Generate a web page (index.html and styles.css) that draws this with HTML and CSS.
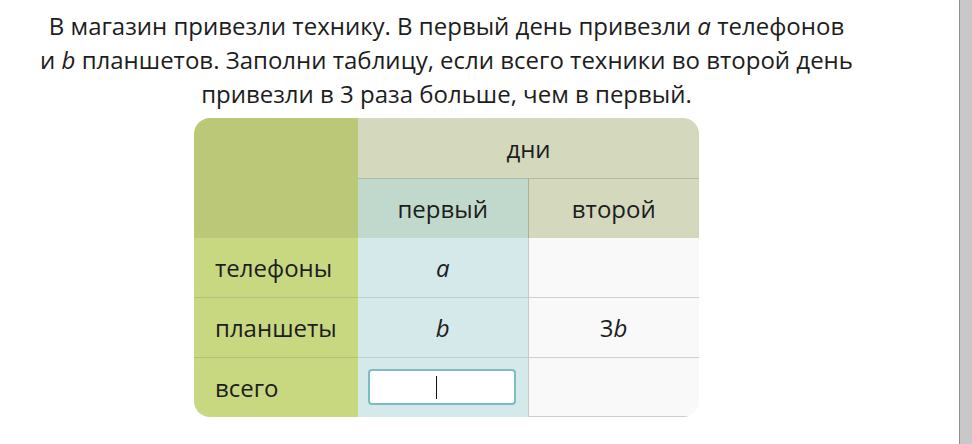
FILE: index.html
```html
<!DOCTYPE html>
<html lang="ru">
<head>
<meta charset="utf-8">
<title>Таблица</title>
<link rel="stylesheet" href="styles.css">
</head>
<body>
<div class="page">
  <main class="content">
    <p class="task">В магазин привезли технику. В первый день привезли <i>a</i> телефонов<br>и <i>b</i> планшетов. Заполни таблицу, если всего техники во второй день<br>привезли в 3 раза больше, чем в первый.</p>
    <div class="table-wrap">
      <table class="grid">
        <colgroup>
          <col class="c-label">
          <col class="c-first">
          <col class="c-second">
        </colgroup>
        <thead>
          <tr>
            <th class="corner" rowspan="2"></th>
            <th class="days" colspan="2">дни</th>
          </tr>
          <tr>
            <th class="h-first">первый</th>
            <th class="h-second">второй</th>
          </tr>
        </thead>
        <tbody>
          <tr>
            <th class="label">телефоны</th>
            <td class="first"><i>a</i></td>
            <td class="second"></td>
          </tr>
          <tr>
            <th class="label">планшеты</th>
            <td class="first"><i>b</i></td>
            <td class="second">3<i>b</i></td>
          </tr>
          <tr class="last">
            <th class="label">всего</th>
            <td class="first"><div class="field"><span class="caret"></span></div></td>
            <td class="second"></td>
          </tr>
        </tbody>
      </table>
    </div>
  </main>
  <div class="scrollbar"></div>
</div>
</body>
</html>
```

FILE: styles.css
```css
html, body {
  margin: 0;
  padding: 0;
  background: #ffffff;
}

body {
  font-family: "Open Sans", "Noto Sans", sans-serif;
  color: #1d1d1d;
}

.page {
  display: grid;
  grid-template-columns: 893px 1fr 13px;
  height: 444px;
  overflow: hidden;
}

.content {
  grid-column: 1;
  text-align: center;
}

.scrollbar {
  grid-column: 3;
  background: #c8c8c8;
  border-left: 1px solid #8f8f8f;
}

.task {
  margin: 9px 0 0;
  font-size: 24px;
  line-height: 34px;
}

.task i {
  font-style: italic;
}

.table-wrap {
  width: 505px;
  margin: 7px auto 0;
  border-radius: 16px;
  overflow: hidden;
}

.grid {
  width: 505px;
  border-collapse: collapse;
  table-layout: fixed;
  font-size: 24px;
}

.c-label { width: 164px; }
.c-first { width: 170px; }
.c-second { width: 171px; }

.grid th,
.grid td {
  height: 59px;
  padding: 0;
  font-weight: normal;
  text-align: center;
  vertical-align: middle;
  border-top: 1px solid #c3c6b6;
}

.grid thead tr:first-child th {
  border-top: none;
  height: 60px;
}

.corner {
  background: #bac878;
}

.days {
  background: #d4d8bd;
}

.h-first {
  background: #c1d9cc;
  border-top-color: #b3b8a3 !important;
}

.h-second {
  background: #d4d8bd;
  border-top-color: #b3b8a3 !important;
  border-left: 1px solid #a9b19c;
}

.label {
  background: #c8d880;
  text-align: left !important;
  padding-left: 21px !important;
  border-top-color: #b4bf7e !important;
}

.grid tbody tr:first-child th,
.grid tbody tr:first-child td {
  border-top: none;
}

.first {
  background: #d5e8ea;
  border-top-color: #c0cfd0 !important;
}

.second {
  background: #f9f9f9;
  border-left: 1px solid #c9c9c9;
  border-right: 1px solid #cdcdcd;
  border-top-color: #cfcfcf !important;
}

.last th,
.last td {
  height: 58px;
}

.last .second {
  border-bottom: 1px solid #cdcdcd;
}

.grid i {
  font-style: italic;
}

.field {
  width: 144px;
  height: 32px;
  margin: 0 auto;
  position: relative;
  left: -1px;
  background: #ffffff;
  border: 2px solid #7bbcc5;
  border-radius: 4px;
  display: flex;
  align-items: center;
  justify-content: center;
}

.caret {
  width: 1px;
  height: 23px;
  background: #111111;
  margin-left: -10px;
}
```
